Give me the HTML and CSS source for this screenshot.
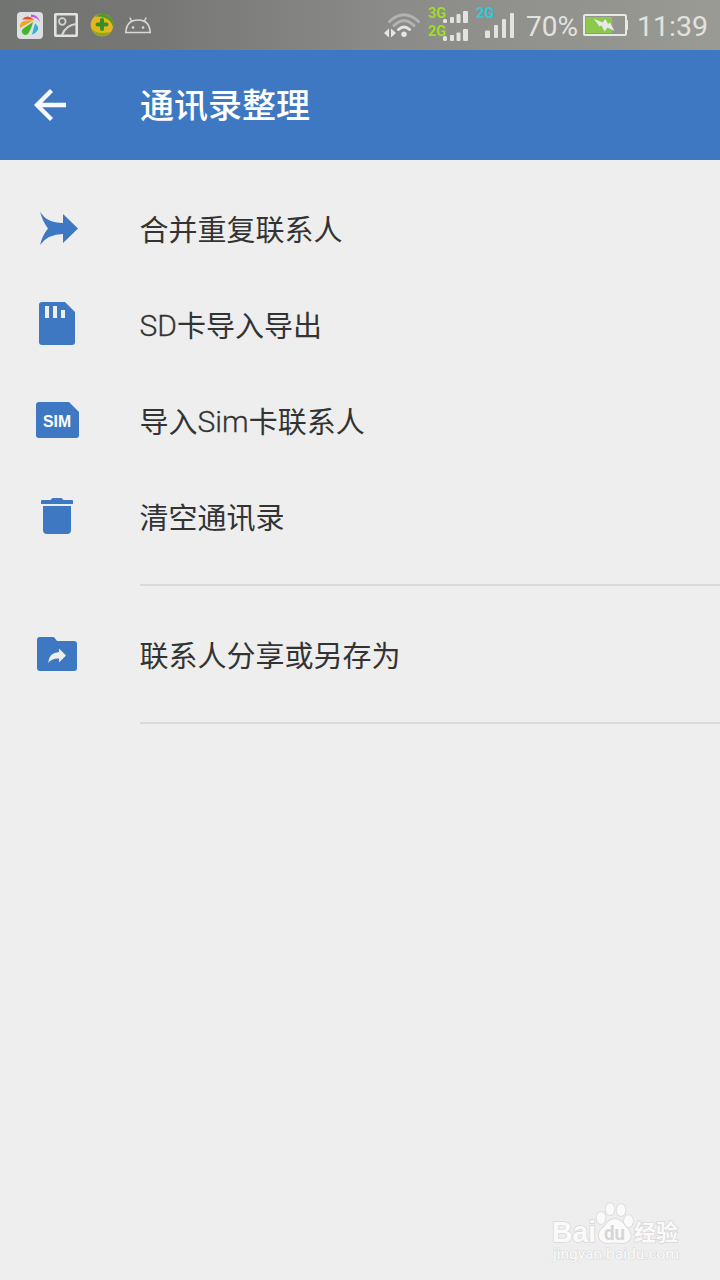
FILE: index.html
```html
<!DOCTYPE html>
<html lang="zh-CN">
<head>
    <meta charset="UTF-8">
    <meta name="viewport" content="width=device-width, initial-scale=1.0">
    <title>通讯录整理</title>
    <link rel="stylesheet" href="styles.css">
</head>
<body>

    <div class="status-bar">
        <svg class="notifications" width="160" height="50" viewBox="0 0 160 50">
            <!-- gallery app -->
            <rect x="17" y="12" width="26" height="27" rx="4" fill="#dce0e2"/>
            <path d="M22 19.500q5-6 12 0z" fill="#e8502c"/>
            <path d="M31 14.500q7 0 9 7.500q-3-5-9-5z" fill="#c456dc"/>
            <path d="M20 28q-1-8 8-7.500l6-.5z" fill="#f5a51d"/>
            <path d="M23 34q-3-3 1-6l9-6q-1 6-5 12q-3 2-5 0z" fill="#47b52a"/>
            <path d="M32 34.500l3-11q4 3 3 6q-2 4-6 5z" fill="#2eb2e2"/>
            <!-- picture -->
            <rect x="55.300" y="14.300" width="21.400" height="21.400" rx=".5" fill="none" stroke="#e2e2e0" stroke-width="2.600"/>
            <circle cx="62.300" cy="21.500" r="3.300" fill="none" stroke="#d2d3d1" stroke-width="1.800"/>
            <path d="M62 35q4-10 14-11" fill="none" stroke="#d8d9d7" stroke-width="2.200"/>
            <!-- security -->
            <circle cx="102" cy="25" r="11.300" fill="#e4b51c"/>
            <path d="M95 16.500q6-4.500 12.500-1.300q7 4 5.500 12q-2-8-8.500-9.500q-5-1.500-9.500-1.200z" fill="#4f9a2d"/>
            <path d="M91 28q4 5 11 5q5 0 8-1q-3 4.500-9 4.300q-8-1-10-8.300z" fill="#88a923"/>
            <path d="M102 20v9M97.500 24.500h9" stroke="#3a8d26" stroke-width="4" stroke-linecap="round"/>
            <!-- android -->
            <path d="M125.800 32.500Q126.500 20 138 20Q149.500 20 150.200 32.500z" fill="none" stroke="#d9dad8" stroke-width="1.600"/>
            <path d="M132 21.500l-2.300-4M144 21.500l2.300-4" stroke="#d9dad8" stroke-width="1.500"/>
            <circle cx="133" cy="27.500" r="1.300" fill="#d9dad8"/>
            <circle cx="143" cy="27.500" r="1.300" fill="#d9dad8"/>
        </svg>
        <svg class="signals" width="140" height="50" viewBox="0 0 140 50">
            <!-- wifi -->
            <g fill="none" stroke-linecap="round" stroke-width="3">
                <path d="M9.500 21.500Q24 8 38.500 21.500" stroke="#b3b3af"/>
                <path d="M14 25.500Q24 16 34 25.500" stroke="#b3b3af"/>
                <path d="M18.500 29.500Q24 24.500 29.500 29.500" stroke="#e6e6e4"/>
            </g>
            <circle cx="24" cy="34.300" r="2.700" fill="#e6e6e4"/>
            <path d="M4 33l5-4.500v9zM16 33l-5-4.500v9z" fill="#e6e6e4"/>
            <!-- two rows of bars for the first card -->
            <text class="net net-green" x="48" y="18" textLength="18" lengthAdjust="spacingAndGlyphs">3G</text>
            <text class="net net-green" x="48" y="35.500" textLength="18" lengthAdjust="spacingAndGlyphs">2G</text>
            <g fill="#e2e2e0">
                <rect x="63" y="19" width="4" height="4" rx="1.500"/>
                <rect x="70" y="17" width="4" height="6" rx="1"/>
                <rect x="76.500" y="14" width="4" height="9" rx="1"/>
                <rect x="83" y="11" width="5" height="12" rx="1"/>
                <rect x="63" y="36" width="4" height="5" rx="1.500"/>
                <rect x="70" y="35" width="4" height="6" rx="1"/>
                <rect x="76.500" y="32.500" width="4" height="8.500" rx="1"/>
                <rect x="83" y="29" width="5" height="12" rx="1"/>
            </g>
            <!-- second card -->
            <text class="net net-cyan" x="96" y="18" textLength="18" lengthAdjust="spacingAndGlyphs">2G</text>
            <g fill="#e2e2e0">
                <rect x="105" y="30.500" width="5" height="7.500" rx="1"/>
                <rect x="114" y="25" width="4" height="13" rx="1"/>
                <rect x="122" y="19" width="4" height="19" rx="1"/>
                <rect x="130" y="13" width="4" height="25" rx="1"/>
            </g>
        </svg>
        <span class="percent">70%</span>
        <svg class="battery" width="46" height="50" viewBox="0 0 46 50">
            <rect x="1" y="15" width="42" height="20" rx="1.500" fill="none" stroke="#e8e8e6" stroke-width="2"/>
            <rect x="43" y="20" width="2" height="10" rx="1" fill="#e8e8e6"/>
            <rect x="2.500" y="17" width="26.500" height="16" fill="#8cc84b"/>
            <path d="M10.500 18.500L19.500 22.500L22.500 19L25 24L27 22.500L31.500 31L24.500 27.500L21.500 31.500L18.500 25.500L16.500 26.500z" fill="#e8e8e6"/>
        </svg>
        <span class="clock">11:39</span>
    </div>

    <header class="app-bar">
        <svg class="back" width="40" height="40" viewBox="0 0 40 40">
            <path d="M36 20H7M21.500 5.500L7 20L21.500 34.500" fill="none" stroke="#f7f9fc" stroke-width="4.300"/>
        </svg>
        <h1>通讯录整理</h1>
    </header>

    <ul class="menu">
        <li class="menu-item">
            <svg class="icon" viewBox="0 0 48 48">
                <path d="M7 5.700Q14 17 30 17V8L45 22.500L30 37V28Q15 28 7 39Q9.500 29 15 22.500Q9.500 15 7 5.700z"/>
            </svg>
            <span class="label">合并重复联系人</span>
        </li>
        <li class="menu-item">
            <svg class="icon" viewBox="0 0 48 48">
                <path d="M9 0H32L42 10V40a3 3 0 0 1-3 3H9a3 3 0 0 1-3-3V3a3 3 0 0 1 3-3z"/>
                <path class="cutout" d="M12 4h4v12h-4zM20 4h4v12h-4zM28 8h4v8h-4z"/>
            </svg>
            <span class="label"><span class="latin">SD</span>卡导入导出</span>
        </li>
        <li class="menu-item">
            <svg class="icon" viewBox="0 0 48 48">
                <path d="M6 4H36L46 14V37a3 3 0 0 1-3 3H6a3 3 0 0 1-3-3V7a3 3 0 0 1 3-3z"/>
                <text class="sim" x="24" y="28.500" textLength="28" lengthAdjust="spacingAndGlyphs">SIM</text>
            </svg>
            <span class="label">导入<span class="latin">Sim</span>卡联系人</span>
        </li>
        <li class="menu-item">
            <svg class="icon" viewBox="0 0 48 48">
                <path d="M9 6H17.500L19.500 4H28.500L30.500 6H39a1 1 0 0 1 1 1V10H8V7a1 1 0 0 1 1-1z"/>
                <path d="M10 12H38V36a4 4 0 0 1-4 4H14a4 4 0 0 1-4-4z"/>
            </svg>
            <span class="label">清空通讯录</span>
        </li>
    </ul>

    <ul class="menu">
        <li class="menu-item">
            <svg class="icon" viewBox="0 0 48 48">
                <path d="M7 5H20Q21.500 5 22.500 7L24 9H41a3 3 0 0 1 3 3V36a3 3 0 0 1-3 3H7a3 3 0 0 1-3-3V8a3 3 0 0 1 3-3z"/>
                <path class="cutout" d="M15 31Q16 20.500 26 20V16.500L33 23.500L26 30.500V26.500Q19 26 15 31z"/>
            </svg>
            <span class="label">联系人分享或另存为</span>
        </li>
    </ul>

    <svg class="watermark" width="136" height="70" viewBox="0 0 136 70">
        <text class="wm-name" x="2" y="42" textLength="44" lengthAdjust="spacingAndGlyphs">Bai</text>
        <g class="wm-paw">
            <ellipse cx="51" cy="18" rx="4.500" ry="6"/>
            <ellipse cx="60" cy="9" rx="4.500" ry="6"/>
            <ellipse cx="71" cy="10" rx="4.500" ry="6"/>
            <ellipse cx="78.500" cy="21" rx="4.500" ry="6"/>
            <path d="M65 19Q71 19 75 26Q82 32 80.500 38Q78 43.500 71 43Q65 42 59 43Q51 43.500 49 37Q48 31 55 26Q59 19 65 19z"/>
        </g>
        <text class="wm-du" x="54" y="39.500" textLength="21" lengthAdjust="spacingAndGlyphs">du</text>
        <text class="wm-cn" x="84" y="40">经验</text>
        <text class="wm-url" x="3" y="59" textLength="126" lengthAdjust="spacingAndGlyphs">jingyan.baidu.com</text>
    </svg>

</body>
</html>
```

FILE: styles.css
```css
* {
    box-sizing: border-box;
}
body {
    position: relative;
    margin: 0;
    width: 720px;
    height: 1280px;
    overflow: hidden;
    background-color: #eee;
    color: #333;
    font-family: Roboto, "Noto Sans CJK SC", sans-serif;
}
svg {
    display: block;
    flex: none;
}
.status-bar {
    display: flex;
    height: 50px;
    background: linear-gradient(90deg, #727472 0%, #767775 20%, #8b8b89 55%, #999a93 100%);
    color: #e2e2e0;
    font-size: 28.5px;
    line-height: 53px;
    white-space: nowrap;
}
.signals {
    margin-left: 220px;
}
.net {
    font-size: 14.5px;
    font-weight: 700;
}
.net-green {
    fill: #a0dc28;
}
.net-cyan {
    fill: #2bcbdc;
}
.percent {
    width: 57px;
    padding-left: 6px;
    font-size: 28px;
}
.battery {
    margin-left: 6px;
}
.clock {
    margin-left: 8px;
}

.app-bar {
    display: flex;
    align-items: center;
    height: 110px;
    padding-left: 30px;
    background-color: #3e78c2;
    color: #fff;
}
h1 {
    margin: 0 0 0 70px;
    padding-top: 2px;
    font-size: 34px;
    font-weight: 500;
    line-height: 50px;
}

.menu {
    margin: 0;
    padding: 22px 0 0;
    list-style: none;
}
.menu::after {
    content: "";
    display: block;
    height: 2px;
    margin: 18px 0 0 140px;
    background-color: #dadada;
}
.menu-item {
    display: flex;
    align-items: center;
    height: 96px;
    padding-left: 33px;
}
.icon {
    width: 48px;
    height: 48px;
    margin-right: 58.5px;
    fill: #3e78c2;
}
.label {
    padding-top: 2px;
    font-size: 29px;
    line-height: 44px;
}
.latin {
    font-size: 30px;
    font-weight: 300;
    line-height: 1;
    vertical-align: 1px;
    -webkit-text-stroke: 0.3px #333;
}
.cutout {
    fill: #eee;
}
.sim {
    fill: #fff;
    font-family: "Liberation Sans", Arial, sans-serif;
    font-size: 16.5px;
    font-weight: 700;
    text-anchor: middle;
}

.watermark {
    position: absolute;
    left: 550px;
    top: 1200px;
    fill: #fafafa;
    stroke: #d8d8d8;
    stroke-width: 1.5px;
    paint-order: stroke;
}
.wm-name {
    font-family: "Liberation Sans", Arial, sans-serif;
    font-size: 30px;
    font-weight: 700;
}
.wm-du {
    fill: #d6d6d6;
    stroke: none;
    font-size: 21px;
    font-weight: 700;
}
.wm-cn {
    font-size: 22px;
    font-weight: 700;
}
.wm-url {
    font-size: 14px;
    stroke: #dadada;
    stroke-width: 1.2px;
}
```
